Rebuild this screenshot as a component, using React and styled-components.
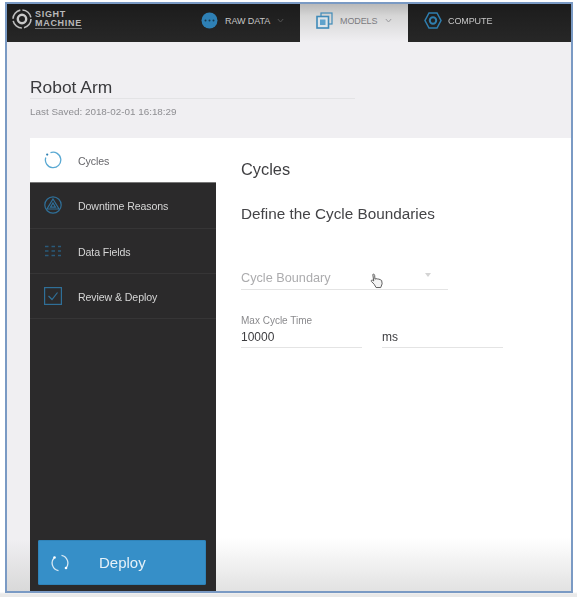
import React from 'react';
import styled, { createGlobalStyle } from 'styled-components';

const Global = createGlobalStyle`
  html, body { margin: 0; padding: 0; background: #fff; }
  body { width: 577px; height: 597px; overflow: hidden; font-family: "Liberation Sans", Arial, sans-serif; }
  * { box-sizing: border-box; }
`;
const Page = styled.div`
  width: 577px; height: 597px; padding: 2px 4px 4px 5px; background: linear-gradient(#fff 0, #fff 592px, #e9e9e9 594px);
`;
const Frame = styled.div`
  width: 568px; height: 591px; border: 2px solid #7a9ac4; display: flex; flex-direction: column;
  background: linear-gradient(#f0eff2 0, #f0eff2 535px, #d9d9d9 100%); overflow: hidden;
`;
const Blur = styled.div`
  flex: 1; min-height: 0; display: flex; flex-direction: column; filter: blur(0.35px);
`;
const TopBar = styled.header`
  height: 38px; flex: none; background: linear-gradient(#1c1c1c, #272727); display: flex; align-items: stretch;
`;
const Logo = styled.div`
  width: 186px; padding-left: 4px; display: flex; align-items: center; gap: 2px; flex: none; margin-top: -8px;
`;
const LogoText = styled.div`
  font-weight: 700; font-size: 9px; line-height: 9px; letter-spacing: .7px; color: #b9b9b9;
  span { display: block; }
  span + span { border-bottom: 1px solid #777; }
`;
const NavTab = styled.div`
  display: flex; align-items: center; gap: ${p => p.$gap}px; flex: none;
  width: ${p => p.$w}px; padding-left: ${p => p.$pl}px; padding-bottom: 5px;
  font-size: 9px; letter-spacing: -0.1px; color: ${p => p.$active ? '#7b7b7f' : '#c7c7c7'};
  background: ${p => p.$active ? 'linear-gradient(#b9b9b9 0, #d6d6d6 12px, #f0eff2 38px)' : 'transparent'};
`;
const Chevron = styled.svg`
  width: 7px; height: 5px; margin-left: ${p => p.$ml}px; fill: none; stroke: ${p => p.$c}; stroke-width: 1;
`;
const Content = styled.div`
  flex: 1; min-height: 0; display: flex; flex-direction: column; padding-left: 23px;
`;
const Heading = styled.div`
  height: 96px; flex: none; padding-top: 35px;
`;
const Title = styled.h1`
  margin: 0; width: 325px; height: 22px; font-size: 17.4px; line-height: 21px; font-weight: 400; color: #3a3a3d;
  border-bottom: 1px solid #e3e3e5;
`;
const Saved = styled.div`
  margin-top: 7px; font-size: 9.9px; line-height: 12px; color: #8e8e92;
`;
const Card = styled.div`
  flex: 1; min-height: 0; display: flex; background: linear-gradient(#fff 0, #fff 400px, #e2e2e2 100%);
`;
const Side = styled.aside`
  width: 186px; flex: none; background: #2b2a2b; display: flex; flex-direction: column;
`;
const SideItem = styled.div`
  height: 45.3px; flex: none; display: flex; align-items: center; padding: 2px 0 0 14px; gap: 16px;
  font-size: 10.6px; letter-spacing: -0.1px;
  color: ${p => p.$active ? '#66666a' : '#d6d6d6'};
  background: ${p => p.$active ? '#fff' : 'transparent'};
  border-bottom: 1px solid ${p => p.$active ? '#777' : '#363536'};
`;
const IconBox = styled.span`
  width: 18px; height: 18px; flex: none; display: block; margin-top: -2px;
  svg { display: block; width: 18px; height: 18px; }
`;
const Spacer = styled.div`flex: 1;`;
const DeployButton = styled.button`
  height: 45px; margin: 0 10px 6px 8px; border: 0; border-radius: 2px; background: #368fc8; color: #e6f1f8;
  font: 400 15px "Liberation Sans", sans-serif; display: flex; align-items: center; padding: 0 0 0 13px; gap: 30px;
  box-shadow: inset 0 0 0 1px #2f83b9;
`;
const Main = styled.main`
  flex: 1; padding: 21px 0 0 25px; position: relative;
`;
const H2 = styled.h2`
  margin: 0; font-size: 16.4px; line-height: 20px; font-weight: 400; color: #3f3f42;
`;
const H3 = styled.h3`
  margin: 26px 0 0; font-size: 15.3px; line-height: 18px; font-weight: 400; color: #444447;
`;
const Select = styled.div`
  margin-top: 46px; width: 207px; height: 21px; display: flex; justify-content: space-between; padding-right: 17px;
  font-size: 12.7px; line-height: 18px; color: #acacae; border-bottom: 1px solid #e4e4e4;
`;
const Caret = styled.i`
  margin-top: 4px; width: 0; height: 0; border: 3.5px solid transparent; border-top: 4px solid #d4d4d4; border-bottom: 0;
`;
const Cursor = styled.svg`
  position: absolute; left: 154px; top: 135px; width: 14px; height: 16px;
`;
const Fields = styled.div`
  margin-top: 24px; display: flex; gap: 20px;
`;
const Field = styled.div`
  width: 121px; height: 34px; border-bottom: 1px solid #e4e4e4; display: flex; flex-direction: column; justify-content: flex-end;
`;
const Label = styled.label`
  font-size: 10px; line-height: 12px; color: #8a8a8d; margin-bottom: 3px;
`;
const Value = styled.div`
  font-size: 12px; line-height: 15px; color: #3d3d40; padding-bottom: 2px; box-sizing: content-box;
`;

const blue = '#2f6f98';
const dim = '#2a5a7a';
const LogoMark = () => (
  <svg width="22" height="22" viewBox="0 0 22 22" fill="none">
    <circle cx="11" cy="11" r="9" stroke="#bdbdbd" strokeWidth="1.6" strokeDasharray="12 2.2" />
    <circle cx="11" cy="11" r="4.2" stroke="#c9c9c9" strokeWidth="2.4" />
  </svg>
);
const Chev = ({ ml, c }) => <Chevron $ml={ml} $c={c} viewBox="0 0 7 5"><path d="M.8 1 3.500 4 6.200 1" /></Chevron>;

export default function App() {
  return (
    <Page>
      <Global />
      <Frame>
        <Blur>
        <TopBar>
          <Logo>
            <LogoMark />
            <LogoText><span>SIGHT</span><span>MACHINE</span></LogoText>
          </Logo>
          <NavTab $w={107} $pl={8} $gap={7}>
            <svg width="17" height="17" viewBox="0 0 17 17"><circle cx="8.5" cy="8.5" r="8" fill="#2e80b5" /><g fill="#16384f"><circle cx="4.5" cy="8.5" r="1" /><circle cx="8.5" cy="8.5" r="1" /><circle cx="12.5" cy="8.5" r="1" /></g></svg>
            <span>RAW DATA</span><Chev ml={0} c="#555" />
          </NavTab>
          <NavTab $active $w={108} $pl={16} $gap={7}>
            <svg width="17" height="17" viewBox="0 0 17 17" fill="none" stroke="#3f8ab8"><rect x="5" y="1" width="11" height="11" strokeWidth="1.2" /><rect x="1" y="4.5" width="11.5" height="11.5" fill="#dde4e9" strokeWidth="1.6" /><rect x="4" y="7.5" width="5.5" height="5.5" fill="#5fa2cc" stroke="none" /></svg>
            <span>MODELS</span><Chev ml={1} c="#9a9a9e" />
          </NavTab>
          <NavTab $w={140} $pl={16} $gap={6}>
            <svg width="18" height="17" viewBox="0 0 18 17" fill="none" stroke="#2f7fb0"><path d="M5 1h8l4 7.5L13 16H5L1 8.500Z" strokeWidth="1.500" /><circle cx="9" cy="8.500" r="3.200" strokeWidth="2" /></svg>
            <span>COMPUTE</span>
          </NavTab>
        </TopBar>
        <Content>
          <Heading>
            <Title>Robot Arm</Title>
            <Saved>Last Saved: 2018-02-01 16:18:29</Saved>
          </Heading>
          <Card>
            <Side>
              <SideItem $active>
                <IconBox>
                  <svg viewBox="0 0 18 18" fill="none" stroke="#5aa9d3" strokeWidth="1.300"><path d="M6.500 1.700A7.700 7.700 0 1 1 1.800 6.500" /><circle cx="3.200" cy="3.600" r="1.100" fill="#2f7fb0" stroke="none" /></svg>
                </IconBox>
                Cycles
              </SideItem>
              <SideItem>
                <IconBox>
                  <svg viewBox="0 0 18 18" fill="none" stroke={blue} strokeWidth="1.200"><circle cx="9" cy="9" r="8.200" /><path d="M9 3 15 13H3Z" /><path d="M9 7 11.500 11.200H6.500Z" /></svg>
                </IconBox>
                Downtime Reasons
              </SideItem>
              <SideItem>
                <IconBox>
                  <svg viewBox="0 0 18 18" stroke={dim} strokeWidth="1.500" strokeDasharray="3.500 3" fill="none"><path d="M1 4.500H17M1 9H17M1 13.500H17" /></svg>
                </IconBox>
                Data Fields
              </SideItem>
              <SideItem>
                <IconBox>
                  <svg viewBox="0 0 18 18" fill="none" stroke={blue} strokeWidth="1.200"><rect x="0.600" y="0.600" width="16.800" height="16.800" /><path d="M4.500 9 8 12.500 13.500 5.500" /></svg>
                </IconBox>
                Review &amp; Deploy
              </SideItem>
              <Spacer />
              <DeployButton>
                <svg width="18" height="18" viewBox="0 0 18 18" fill="none" stroke="#d7e8f3" strokeWidth="1.300"><path d="M10.500 1.300A7.800 7.800 0 0 1 15 14" /><path d="M7.500 16.700A7.800 7.800 0 0 1 3 4" /><circle cx="15" cy="14" r="1.300" fill="#fff" stroke="none" /><circle cx="3.500" cy="3.500" r="1.300" fill="#fff" stroke="none" /></svg>
                Deploy
              </DeployButton>
            </Side>
            <Main>
              <H2>Cycles</H2>
              <H3>Define the Cycle Boundaries</H3>
              <Select>Cycle Boundary<Caret /></Select>
              <Cursor viewBox="0 0 15 17" fill="#f4f4f4" stroke="#555" strokeWidth="1">
                <path d="M3 1.500c1-.8 2 0 2 1l.3 4 1.200-.5 1.500.3 1.400.2 1.500.5 1.600 1 .5 3.500-1.500 4H6.500L4.500 12l-3-3c-.6-1 .3-2 1.500-1.300l1 .8Z" />
              </Cursor>
              <Fields>
                <Field><Label>Max Cycle Time</Label><Value>10000</Value></Field>
                <Field><Value>ms</Value></Field>
              </Fields>
            </Main>
          </Card>
        </Content>
        </Blur>
      </Frame>
    </Page>
  );
}
